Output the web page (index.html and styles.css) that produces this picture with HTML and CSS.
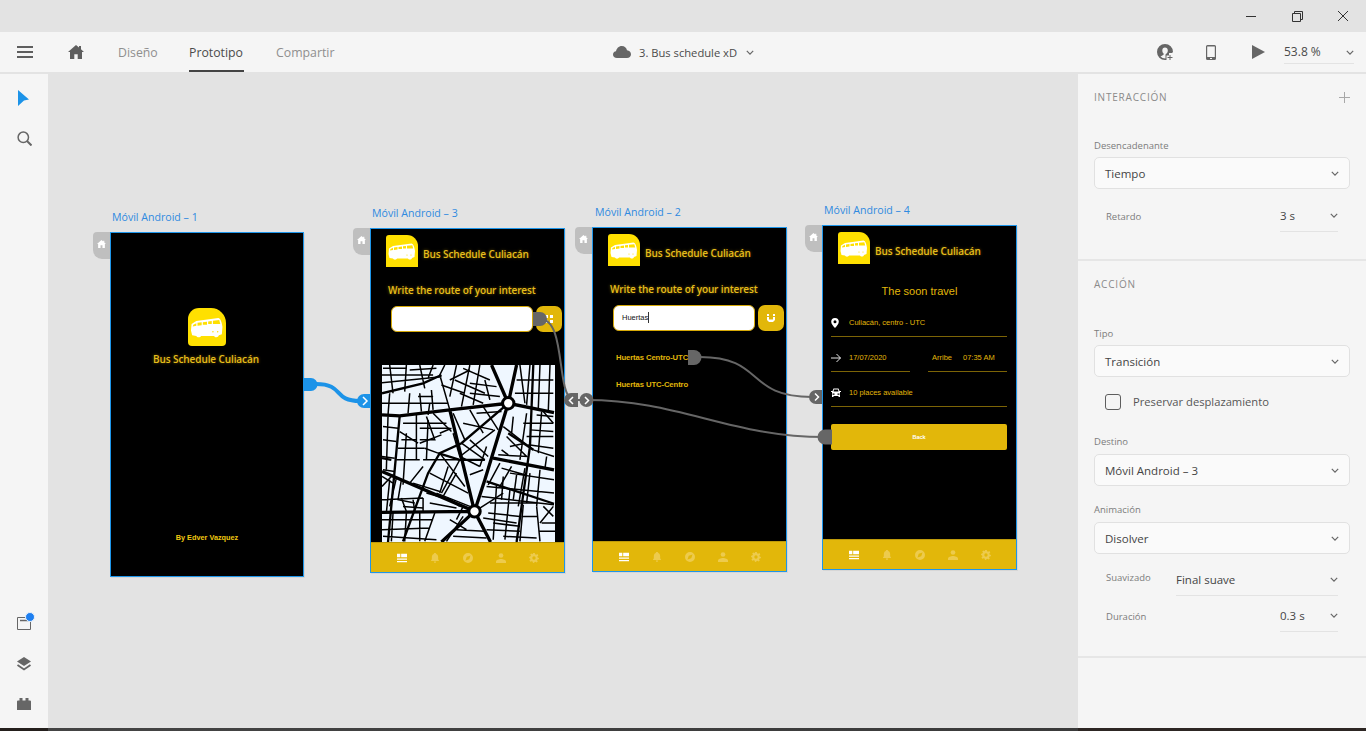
FILE: index.html
```html
<!DOCTYPE html>
<html lang="es">
<head>
<meta charset="utf-8">
<title>3. Bus schedule xD</title>
<link rel="stylesheet" href="styles.css">
</head>
<body>
<svg class="defs" aria-hidden="true">
  <symbol id="bus" viewBox="0 0 32 32">
    <path fill="#fff" d="M3 13.500 7 11 25.500 8.500C27.500 9 28.500 12 29 16L28.500 22 26 23C25.500 25 22.500 25 22 23.500H11C10.500 25 7.500 25 7 23.500L3.500 23 2.500 19Z"/>
    <path fill="#ffe000" d="M4.500 14 7 12.800V15L4 15.500ZM8 12.500 11.500 12.100V14.500L8 15ZM12.500 12 16 11.500V14H12.500ZM17 11.300 20 11V13.500H17ZM21 10.800 26.300 10.200 27.200 13.500H21Z"/>
    <circle fill="#ffe000" cx="21" cy="20" r=".6"/><circle fill="#ffe000" cx="25" cy="20" r=".6"/>
  </symbol>
  <symbol id="n-list" viewBox="0 0 12 10"><path d="M0 0H4V4H0ZM5 0H12V4H5ZM0 5.500H12V7H0ZM0 8.500H12V10H0Z"/></symbol>
  <symbol id="n-bell" viewBox="0 0 12 12"><path d="M6 0C7 0 7.500.6 7.500 1.200 9.200 1.900 9.800 3.300 9.800 5V7.500L11 9.500H1L2.200 7.500V5C2.200 3.300 2.800 1.900 4.500 1.200 4.500.6 5 0 6 0ZM4.600 10.300H7.400C7.300 11.300 6.700 12 6 12S4.700 11.300 4.600 10.300Z"/></symbol>
  <symbol id="n-comp" viewBox="0 0 12 12"><path fill-rule="evenodd" d="M6 0A6 6 0 1 1 6 12 6 6 0 0 1 6 0ZM9 3 4.500 4.500 3 9 7.500 7.500Z"/></symbol>
  <symbol id="n-user" viewBox="0 0 12 12"><circle cx="6" cy="3" r="2.800"/><path d="M0 12V10.500C0 8.500 3.500 7.300 6 7.300S12 8.500 12 10.500V12Z"/></symbol>
  <symbol id="n-gear" viewBox="0 0 12 12"><path fill-rule="evenodd" d="M5 0H7L7.300 1.600 8.600 2.100 10 1.300 11.200 3 10 4.200 10.300 5.300 12 6 11.700 7.600 10.200 7.900 9.700 9.100 10.500 10.500 9 11.500 7.800 10.400 6.800 10.700 6 12 4.700 11.700 4.300 10.300 3.100 9.800 1.600 10.500.5 9 1.700 7.700 1.400 6.700 0 6 .3 4.400 1.800 4 2.300 2.900 1.500 1.500 3 .5 4.200 1.600ZM6 4A2 2 0 1 0 6 8 2 2 0 0 0 6 4Z"/></symbol>
  <symbol id="home" viewBox="0 0 16 14"><path d="M8 0 11 2.600V1H13V4.300L16 7H14V14H9.700V9.300H6.300V14H2V7H0Z"/></symbol>
  <symbol id="chev" viewBox="0 0 10 6"><path d="M1 1 5 5 9 1" fill="none" stroke="#666" stroke-width="1.500"/></symbol>
</svg>

<div class="app">
  <header class="titlebar">
    <svg class="winbtn" viewBox="0 0 46 32"><path d="M18 16.500H28" stroke="#333" fill="none"/></svg>
    <svg class="winbtn" viewBox="0 0 46 32"><path d="M18.500 13.500H26.500V21.500H18.500ZM20.500 13.500V11.500H28.500V19.500H26.500" stroke="#333" fill="none"/></svg>
    <svg class="winbtn" viewBox="0 0 46 32"><path d="M18 11 28 21M28 11 18 21" stroke="#333" fill="none"/></svg>
  </header>

  <nav class="topbar">
    <div class="top-left">
      <svg class="burger" viewBox="0 0 16 12"><path d="M0 0H16V2H0ZM0 5H16V7H0ZM0 10H16V12H0Z" fill="#5e5e5e"/></svg>
      <svg class="top-home"><use href="#home"/></svg>
      <a class="tab tab-a">Diseño</a>
      <a class="tab tab-b active">Prototipo</a>
      <a class="tab tab-c">Compartir</a>
    </div>
    <div class="top-center">
      <svg class="cloud" viewBox="0 0 18 12"><path d="M4 12C1.500 12 0 10.500 0 8.500 0 6.700 1.300 5.500 3 5.300 3.500 2.500 5.700 0 8.800 0 11.500 0 13.500 1.800 14 4.200 16.300 4.500 18 6 18 8.200 18 10.500 16.300 12 14 12Z" fill="#666"/></svg>
      <span class="doc-title">3. Bus schedule xD</span>
      <svg class="chev"><use href="#chev"/></svg>
    </div>
    <div class="top-right">
      <svg class="t-user" viewBox="0 0 17 17"><path fill="#666" fill-rule="evenodd" d="M8 0A8 8 0 0 1 16 8L15 9H12V11.500H9.500V15.900L8 16A8 8 0 0 1 8 0ZM8 3.500C6.300 3.500 5.300 4.800 5.300 6.500 5.300 8 6 9 6.600 9.500V10.800L3.500 12.500A6.500 6.500 0 0 0 8.500 14.500V10.500L9.500 9.500C10.300 9 10.800 7.800 10.800 6.500 10.800 4.800 9.700 3.500 8 3.500Z"/><path d="M13 11V16M10.500 13.500H15.500" stroke="#666" fill="none"/></svg>
      <svg class="t-phone" viewBox="0 0 10 15"><path fill="#666" fill-rule="evenodd" d="M1.500 0H8.500A1.500 1.500 0 0 1 10 1.500V13.500A1.500 1.500 0 0 1 8.500 15H1.500A1.500 1.500 0 0 1 0 13.500V1.500A1.500 1.500 0 0 1 1.500 0ZM1.200 1.500V12H8.800V1.500ZM4 13V14H6V13Z"/></svg>
      <svg class="t-play" viewBox="0 0 13 14"><path d="M0 0 13 7 0 14Z" fill="#666"/></svg>
      <div class="zoomctl"><span>53.8 %</span><svg class="chev"><use href="#chev"/></svg></div>
    </div>
  </nav>

  <div class="workspace">
    <aside class="toolbar">
      <div class="tools">
        <svg class="tool tool-arrow" viewBox="0 0 12 16"><path d="M0 0 11 9.500 6 10.500 0 16Z" fill="#1c93e8"/></svg>
        <svg class="tool tool-search" viewBox="0 0 15 15"><circle cx="6.300" cy="6.300" r="5.200" fill="none" stroke="#666" stroke-width="1.500"/><path d="M10 10 14.500 14.500" stroke="#666" stroke-width="2"/></svg>
      </div>
      <div class="tools tools-bottom">
        <div class="notif">
          <svg class="tool-panel" viewBox="0 0 14 13"><path d="M.5.500H13.500V12.500H.5Z" fill="none" stroke="#666"/><path d="M3 3.500H11" stroke="#666" stroke-width="1.500"/></svg>
          <span class="dot"></span>
        </div>
        <svg class="tool tool-layers" viewBox="0 0 16 14"><path d="M8 0 15 4.500 8 9 1 4.500Z" fill="#666"/><path d="M1.500 8 8 12.500 14.500 8" fill="none" stroke="#666" stroke-width="1.800"/></svg>
        <svg class="tool tool-plug" viewBox="0 0 14 12"><path d="M1 2.500H2.500V0H5.500V2.500H8.500V0H11.500V2.500H13A1 1 0 0 1 14 3.500V12H0V3.500A1 1 0 0 1 1 2.500Z" fill="#666"/></svg>
      </div>
    </aside>

    <main class="canvas">
      <!-- Móvil Android – 1 -->
      <section class="board board-1">
        <div class="board-label">Móvil Android – 1</div>
        <div class="screen screen-splash">
          <span class="home-tab"><svg><use href="#home"/></svg></span>
          <div class="logo logo-round"><svg><use href="#bus"/></svg></div>
          <div class="brand">Bus Schedule Culiacán</div>
          <div class="by">By Edver Vazquez</div>
        </div>
      </section>

      <!-- Móvil Android – 3 -->
      <section class="board board-3">
        <div class="board-label">Móvil Android – 3</div>
        <div class="screen">
          <span class="home-tab"><svg><use href="#home"/></svg></span>
          <div class="app-head"><div class="logo"><svg><use href="#bus"/></svg></div><div class="brand">Bus Schedule Culiacán</div></div>
          <div class="heading">Write the route of your interest</div>
          <div class="search-row">
            <div class="field"></div>
            <div class="go"><svg viewBox="0 0 10 10"><path d="M1 1H4V4H1ZM6 1H9V4H6ZM1 6H4V9H1ZM6 6H9V9H6Z" fill="#fff"/></svg></div>
          </div>
          <svg class="map" viewBox="37 15 518 532" preserveAspectRatio="none">
            <rect x="37" y="15" width="518" height="532" fill="#eff7ff"/>
            <g class="road-thin">
              <path d="M37 45H190M37 68 215 50M60 15 70 100M110 15 105 95M150 15 165 85M190 15 175 55M225 15 210 45 240 150"/>
              <path d="M260 15 240 110M300 15 275 140M330 15 310 135M255 60 345 100M280 25 360 60M215 75 285 100"/>
              <path d="M450 15 465 130M480 15 470 135M510 15 505 145M540 15 535 150M440 60H550M435 100H550"/>
              <path d="M37 130H235M120 100 115 160M150 100 155 155M185 90 190 150M60 100 55 165M145 110H190"/>
              <path d="M40 200 85 205M40 240 80 245M55 170 50 330M90 215 145 250M85 265H165M80 300H150M110 220 100 375M140 165 140 300M170 170 195 240 150 240M190 160 245 215"/>
              <path d="M210 220 245 205M250 160 285 240M280 190 370 210M300 150 340 220M340 140 385 210M320 160 395 155M375 210 270 290 250 220"/>
              <path d="M400 200 490 270M470 160 450 300M515 155 505 280M460 190H550M470 230H550M490 270 552 290M420 260 465 250M410 230 470 290 385 285"/>
              <path d="M275 250 345 300M300 240 355 290M270 290 330 320M330 320 350 260M150 205H240M165 265 205 280"/>
              <path d="M160 300 270 300 215 400M210 280 285 380M180 340 295 400M235 320 210 400M260 340 220 410M300 345 340 330M120 370 160 320M95 360 85 420 135 430M130 370 210 395"/>
              <path d="M37 380 70 345M37 420 160 415M60 360 50 460M95 415 110 455M130 420 135 455M160 415 160 455M200 400 300 440M37 290 75 295M40 330 75 335"/>
              <path d="M350 380 552 400M335 410 552 435M390 310 355 375M425 320 390 380M465 325 445 440M510 330 500 440M380 375 370 540M420 390 405 540M460 435 450 545M420 340 552 360M395 325 465 345"/>
              <path d="M330 445 400 400M340 475 440 490M350 510 450 515M500 440 510 545M550 440 510 490M515 490H555M505 515H555M455 470H505"/>
              <path d="M37 480H190M37 510 180 505M40 530 200 540M70 460 65 545M110 460 105 545M150 460 150 545M195 460 165 545M230 545 280 470M260 510 345 515M250 530 350 535M240 480 290 510"/>
              <path d="M395 270 415 285M530 290 525 325M280 440 260 480M500 165 550 170M300 100 390 110M345 60 360 120M180 130 175 165M235 415 270 440"/>
              <path d="M100 190H230M95 240H140M150 250 215 225M175 180 170 300M430 170 425 220M480 210 550 215M475 255 550 265M520 155 550 190"/>
              <path d="M360 430H500M355 460 450 470M370 490 450 500M400 350 395 420M440 345 430 420M480 340 470 430M520 440 550 470M400 530 500 535"/>
              <path d="M240 60 300 30M270 100 340 130M380 80 300 70M40 25H110M120 30 200 25M37 350 70 370M80 355 60 440M100 440 160 445M170 400 240 420M180 430 260 445"/>
            </g>
            <g class="road-mid">
              <path d="M90 168 75 330 55 547M37 100 160 70 215 45M415 130 275 250 210 280 175 340 100 545M350 365 552 432M490 15 480 260 440 547M490 270 415 220"/>
              <path d="M37 295 65 300M205 280 270 300 345 300"/>
            </g>
            <g class="road-major">
              <path d="M37 165 90 168 240 150 415 130 552 158M415 130 345 360 314 455M240 150 314 455M37 335 314 455M37 458 314 455M314 455 362 547M314 455 215 547M415 130 365 15M415 130 440 15M370 295 552 330"/>
            </g>
            <circle cx="415" cy="130" r="17" fill="#fff" stroke="#000" stroke-width="9"/>
            <circle cx="314" cy="455" r="17" fill="#fff" stroke="#000" stroke-width="9"/>
          </svg>
          <div class="tabbar">
            <svg class="on"><use href="#n-list"/></svg><svg><use href="#n-bell"/></svg><svg><use href="#n-comp"/></svg><svg><use href="#n-user"/></svg><svg><use href="#n-gear"/></svg>
          </div>
        </div>
      </section>

      <!-- Móvil Android – 2 -->
      <section class="board board-2">
        <div class="board-label">Móvil Android – 2</div>
        <div class="screen">
          <span class="home-tab"><svg><use href="#home"/></svg></span>
          <div class="app-head"><div class="logo"><svg><use href="#bus"/></svg></div><div class="brand">Bus Schedule Culiacán</div></div>
          <div class="heading">Write the route of your interest</div>
          <div class="search-row">
            <div class="field field-filled"><span class="typed">Huertas</span></div>
            <div class="go"><svg viewBox="0 0 10 10"><path d="M1 1H3V3H1ZM7 1H9V3H7ZM1 4V7L3 9H7L9 7V4H7V6.500H3V4Z" fill="#fff"/></svg></div>
          </div>
          <ul class="routes">
            <li>Huertas Centro-UTC</li>
            <li>Huertas UTC-Centro</li>
          </ul>
          <div class="tabbar">
            <svg class="on"><use href="#n-list"/></svg><svg><use href="#n-bell"/></svg><svg><use href="#n-comp"/></svg><svg><use href="#n-user"/></svg><svg><use href="#n-gear"/></svg>
          </div>
        </div>
      </section>

      <!-- Móvil Android – 4 -->
      <section class="board board-4">
        <div class="board-label">Móvil Android – 4</div>
        <div class="screen">
          <span class="home-tab"><svg><use href="#home"/></svg></span>
          <div class="app-head"><div class="logo"><svg><use href="#bus"/></svg></div><div class="brand">Bus Schedule Culiacán</div></div>
          <div class="soon">The soon travel</div>
          <div class="detail">
            <div class="d-row">
              <svg viewBox="0 0 10 10"><path fill="#fff" fill-rule="evenodd" d="M4 0A3.800 3.800 0 0 1 7.800 3.800C7.800 6 5.500 8.500 4 10 2.500 8.500.2 6 .2 3.800A3.800 3.800 0 0 1 4 0ZM4 2.300A1.500 1.500 0 1 0 4 5.300 1.500 1.500 0 0 0 4 2.300Z"/></svg>
              <span>Culiacán, centro - UTC</span>
            </div>
            <div class="d-split">
              <div class="d-row">
                <svg viewBox="0 0 10 10"><path d="M0 5H9.500M5.500 1 9.500 5 5.500 9" fill="none" stroke="#fff" stroke-width=".9"/></svg>
                <span>17/07/2020</span>
              </div>
              <div class="d-row d-arrive"><span>Arribe</span><span>07:35 AM</span></div>
            </div>
            <div class="d-row">
              <svg viewBox="0 0 10 9"><path fill="#fff" d="M2.500 0H7.500L8.500 2.500H10V3.500H9V8.500H7.500V7.500H2.500V8.500H1V3.500H0V2.500H1.500ZM3 1 2.500 3H7.500L7 1ZM1.500 5V6.200H3.500V5ZM6.500 5V6.200H8.500V5Z"/></svg>
              <span>10 places available</span>
            </div>
          </div>
          <div class="back">Back</div>
          <div class="tabbar">
            <svg class="on"><use href="#n-list"/></svg><svg><use href="#n-bell"/></svg><svg><use href="#n-comp"/></svg><svg><use href="#n-user"/></svg><svg><use href="#n-gear"/></svg>
          </div>
        </div>
      </section>

      <!-- Connector wires over the artboards -->
      <svg class="wires" viewBox="48 74 1030 654">
        <path d="M316 384C345 384 332 401 360 401" fill="none" stroke="#1c93e8" stroke-width="4"/>
        <path d="M303 378H311A6.500 6.500 0 0 1 311 391H303Z" fill="#1c93e8"/>
        <path d="M364 394H370V408H364A7 7 0 0 1 364 394Z" fill="#1c93e8"/>
        <path d="M363 397 367 401 363 405" fill="none" stroke="#fff" stroke-width="1.500"/>

        <path d="M540 319C566 319 556 390 572 400" fill="none" stroke="#666" stroke-width="2"/>
        <path d="M533 312H540A7 7 0 0 1 540 326H533Z" fill="#666"/>
        <path d="M586 400C680 400 730 437 825 437" fill="none" stroke="#666" stroke-width="2"/>
        <path d="M571 393H578V407H571A7 7 0 0 1 571 393Z" fill="#666"/>
        <path d="M573 397 569.500 400.500 573 404" fill="none" stroke="#fff" stroke-width="1.500"/>
        <path d="M572 400H582" stroke="#666" stroke-width="2"/>
        <circle cx="586.500" cy="400" r="7" fill="#666"/>
        <path d="M585 397 588.500 400.500 585 404" fill="none" stroke="#fff" stroke-width="1.500"/>

        <path d="M700 357C765 357 745 397 812 397" fill="none" stroke="#666" stroke-width="2"/>
        <path d="M688 350H694A7.500 7.500 0 0 1 694 365H688Z" fill="#666"/>
        <path d="M816 390H822V404H816A7 7 0 0 1 816 390Z" fill="#666"/>
        <path d="M815 393.500 818.500 397 815 400.500" fill="none" stroke="#fff" stroke-width="1.500"/>

        <path d="M825 429.500H832V444.500H825A7.500 7.500 0 0 1 825 429.500Z" fill="#666"/>
      </svg>
    </main>

    <aside class="panel">
      <section class="p-sec p-int">
        <div class="p-head"><h2>INTERACCIÓN</h2><svg viewBox="0 0 11 11"><path d="M5.500 0V11M0 5.500H11" stroke="#a8a8a8" fill="none"/></svg></div>
        <label class="lbl lbl-first">Desencadenante</label>
        <div class="sel"><span>Tiempo</span><svg class="chev"><use href="#chev"/></svg></div>
        <div class="sub"><span class="sub-l">Retardo</span><div class="sub-v sub-short"><span>3 s</span><svg class="chev"><use href="#chev"/></svg></div></div>
      </section>
      <section class="p-sec p-act">
        <div class="p-head"><h2>ACCIÓN</h2></div>
        <label class="lbl lbl-first lbl-tipo">Tipo</label>
        <div class="sel"><span>Transición</span><svg class="chev"><use href="#chev"/></svg></div>
        <div class="check"><span class="box"></span><span class="check-text">Preservar desplazamiento</span></div>
        <label class="lbl lbl-dest">Destino</label>
        <div class="sel"><span>Móvil Android – 3</span><svg class="chev"><use href="#chev"/></svg></div>
        <label class="lbl lbl-anim">Animación</label>
        <div class="sel"><span>Disolver</span><svg class="chev"><use href="#chev"/></svg></div>
        <div class="sub sub-ease"><span class="sub-l">Suavizado</span><div class="sub-v sub-long"><span>Final suave</span><svg class="chev"><use href="#chev"/></svg></div></div>
        <div class="sub sub-dur"><span class="sub-l">Duración</span><div class="sub-v sub-short"><span>0.3 s</span><svg class="chev"><use href="#chev"/></svg></div></div>
      </section>
    </aside>
  </div>
  <div class="taskstrip"></div>
</div>
</body>
</html>
```
FILE: styles.css
```css
* { box-sizing: border-box; }
html, body { margin: 0; padding: 0; }
body { width: 1366px; height: 731px; overflow: hidden; background: #e3e3e3; font-family: "Open Sans", "Noto Sans", sans-serif; color: #444; }
.defs { position: absolute; width: 0; height: 0; }
.app { display: flex; flex-direction: column; height: 731px; }

/* title bar */
.titlebar { height: 32px; background: #e3e3e3; display: flex; justify-content: flex-end; flex: none; }
.winbtn { width: 46px; height: 32px; display: block; }

/* top bar */
.topbar { height: 40px; flex: none; background: #f5f5f5; position: relative; display: flex; justify-content: space-between; }
.top-left { display: flex; align-items: center; }
.burger { width: 16px; height: 12px; margin-left: 17px; }
.top-home { width: 16px; height: 14px; margin-left: 35px; fill: #5e5e5e; }
.tab { font-size: 12.300px; color: #8f8f8f; height: 40px; line-height: 41px; white-space: nowrap; }
.tab-a { margin-left: 34px; width: 71px; }
.tab-b { width: 87px; }
.tab-b.active { color: #4b4b4b; position: relative; }
.tab-b.active::after { content: ""; position: absolute; left: 0; bottom: 0; width: 55px; height: 2px; background: #444; }
.top-center { position: absolute; left: 613px; top: 0; height: 40px; display: flex; align-items: center; }
.cloud { width: 18px; height: 12px; }
.doc-title { font-size: 11.200px; color: #4b4b4b; margin-left: 8px; white-space: nowrap; width: 107px; }
.chev { width: 8px; height: 5px; display: block; flex: none; }
.top-right { display: flex; align-items: center; height: 40px; margin-left: auto; }
.t-user { width: 17px; height: 17px; }
.t-phone { width: 10px; height: 15px; margin-left: 32px; }
.t-play { width: 13px; height: 14px; margin-left: 36px; }
.zoomctl { width: 70px; margin: 0 12px 0 19px; height: 23px; border-bottom: 1px solid #e3e3e3; display: flex; justify-content: space-between; align-items: center; font-size: 12px; color: #4b4b4b; }
.zoomctl .chev { margin-top: 2px; }

/* workspace */
.workspace { flex: 1; display: flex; margin-top: 2px; min-height: 0; }
.toolbar { width: 48px; flex: none; background: #f5f5f5; display: flex; flex-direction: column; justify-content: space-between; align-items: center; }
.tools { display: flex; flex-direction: column; align-items: center; }
.tool-arrow { width: 12px; height: 16px; margin-top: 16px; display: block; }
.tool-search { width: 15px; height: 15px; margin-top: 25px; display: block; }
.tools-bottom { padding-bottom: 18px; }
.notif { position: relative; width: 14px; height: 13px; }
.tool-panel { width: 14px; height: 13px; display: block; }
.dot { position: absolute; right: -4px; top: -5px; width: 10px; height: 10px; border-radius: 50%; background: #1e7ff0; border: 1px solid #e8f0fa; }
.tool-layers { width: 16px; height: 14px; margin-top: 27px; display: block; }
.tool-plug { width: 14px; height: 12px; margin-top: 27px; display: block; }

/* canvas */
.canvas { flex: 1; position: relative; background: #e3e3e3; overflow: hidden; }
.board { position: absolute; width: 195px; }
.board-1 { left: 62px; top: 136px; width: 194px; }
.board-3 { left: 322px; top: 132px; }
.board-2 { left: 544px; top: 131px; }
.board-4 { left: 774px; top: 129px; }
.board-label { height: 14px; line-height: 14px; font-size: 10.600px; color: #2f8ae0; margin: 0 0 8px 2px; white-space: nowrap; }
.board-2 .board-label { margin-left: 3px; }
.screen { position: relative; height: 345px; background: #000; border: 1px solid #1e96ea; box-shadow: 1px 1px 0 #d6d6d6; display: flex; flex-direction: column; }
.home-tab { position: absolute; left: -18px; top: -1px; width: 17px; height: 27px; background: #bfbfbf; border-radius: 4px 0 0 9px; display: flex; justify-content: center; padding-top: 8px; }
.home-tab svg { width: 9px; height: 8px; fill: #fff; }

.logo { width: 32px; height: 32px; background: #ffe000; border-radius: 3px 11px 0 0; flex: none; }
.logo svg { width: 100%; height: 100%; display: block; }
.brand { font-size: 10px; font-weight: 600; color: #e6bd1c; text-shadow: 0 0 3px rgba(255, 200, 0, .45); white-space: nowrap; letter-spacing: -.1px; }
.app-head { display: flex; align-items: center; padding: 6px 0 0 15px; height: 38px; flex: none; }
.app-head .brand { margin-left: 5px; padding-top: 5px; }
.heading { font-size: 10px; font-weight: 600; color: #e6bd1c; text-shadow: 0 0 3px rgba(255, 200, 0, .45); margin: 16px 0 0 17px; height: 15px; line-height: 15px; white-space: nowrap; letter-spacing: -.12px; flex: none; }
.search-row { display: flex; gap: 3px; margin: 8px 0 0 20px; height: 26px; flex: none; }
.field { width: 142px; background: #fff; border: 1px solid #d6a908; border-radius: 6px; }
.field-filled { display: flex; align-items: center; padding: 0 0 2px 8px; }
.typed { font: 7.500px "Liberation Sans", sans-serif; color: #111; border-right: 1px solid #333; line-height: 11px; }
.go { width: 26px; background: #e2b70a; border-radius: 7px; display: flex; align-items: center; justify-content: center; }
.go svg { width: 10px; height: 10px; }
.map { width: 173px; height: 177px; margin: 33px 0 0 11px; display: block; flex: none; }
.road-thin path { fill: none; stroke: #000; stroke-width: 4.500; }
.road-mid path { fill: none; stroke: #000; stroke-width: 7; }
.road-major path { fill: none; stroke: #000; stroke-width: 10; }
.tabbar { margin-top: auto; height: 30px; background: #e2b70a; border-top: 1px solid #bd9a0a; display: flex; align-items: center; justify-content: center; gap: 23px; flex: none; }
.tabbar svg { width: 10px; height: 10px; fill: #edcb4d; display: block; }
.tabbar svg.on { fill: #fff; }

/* splash */
.screen-splash { align-items: center; }
.logo-round { width: 38px; height: 38px; border-radius: 11px 15px 4px 4px; margin-top: 75px; }
.screen-splash .brand { margin: 6px 2px 0 0; }
.by { margin-top: 167px; font: bold 7.300px "Liberation Sans", sans-serif; color: #f0c810; }

/* routes */
.routes { list-style: none; margin: 18px 0 0 23px; padding: 0; font: bold 7.700px "Liberation Sans", sans-serif; color: #e2b70a; }
.routes li { height: 27px; line-height: 17px; white-space: nowrap; letter-spacing: -.1px; }

/* detail */
.soon { font: 11px "Liberation Sans", sans-serif; color: #e2b70a; text-align: center; margin-top: 20px; height: 14px; line-height: 14px; }
.detail { margin: 4px 9px 0 8px; display: flex; flex-direction: column; }
.d-row { height: 35px; padding-top: 7px; display: flex; align-items: center; font: 7.500px "Liberation Sans", sans-serif; color: #e2b70a; border-bottom: 1px solid #7c6406; white-space: nowrap; }
.d-row svg { width: 10px; height: 10px; margin-right: 8px; flex: none; }
.d-split { display: flex; justify-content: space-between; }
.d-split .d-row { width: 79px; }
.d-arrive { gap: 11px; padding-left: 4px; }
.back { margin: 17px 9px 0 8px; height: 26px; background: #e2b70a; border-radius: 2px; color: #fff; font: bold 5.500px/26px "Liberation Sans", sans-serif; text-align: center; }

/* wires */
.wires { position: absolute; left: 0; top: 0; width: 1030px; height: 654px; pointer-events: none; }

/* panel */
.panel { width: 288px; flex: none; background: #f5f5f5; font-size: 12px; }
.p-sec { border-bottom: 2px solid #e6e6e6; padding: 15px 16px 0; }
.p-int { height: 187px; }
.p-act { height: 397px; }
.p-head { display: flex; justify-content: space-between; align-items: center; height: 16px; }
.p-head h2 { margin: 0; font-size: 10px; font-weight: 400; letter-spacing: .8px; color: #8a8a8a; }
.p-head svg { width: 11px; height: 11px; }
.lbl { display: block; font-size: 9.500px; color: #7c7c7c; height: 14px; line-height: 16px; margin: 16px 0 6px; }
.lbl-first { margin: 33px 0 5px; }
.lbl-tipo { margin-top: 34px; }
.lbl-dest { margin-top: 23px; }
.sel { width: 256px; height: 32px; border: 1px solid #e1e1e1; border-radius: 5px; background: #fafafa; display: flex; justify-content: space-between; align-items: center; padding: 0 10px; font-size: 11.500px; color: #444; }
.sub { display: flex; align-items: flex-start; justify-content: space-between; height: 30px; margin: 13px 12px 0; }
.sub-l { font-size: 9.500px; color: #7c7c7c; line-height: 30px; }
.sub-v { border-bottom: 1px solid #e3e3e3; height: 30px; padding-bottom: 2px; display: flex; justify-content: space-between; align-items: center; font-size: 11.500px; color: #444; }
.sub-short { width: 58px; }
.sub-long { width: 162px; }
.sub-ease { margin-top: 12px; }
.sub-ease .sub-l { line-height: 24px; }
.sub-dur { margin-top: 6px; }
.check { display: flex; align-items: center; height: 18px; margin: 16px 0 0 11px; font-size: 11.200px; color: #555; gap: 12px; }
.check-text { padding-bottom: 2px; }
.box { width: 16px; height: 16px; border: 1.500px solid #5e5e5e; border-radius: 3px; display: block; }

.taskstrip { height: 3px; flex: none; background: linear-gradient(to right, #241f1c 48px, #444 48px, #3a3a3a 1078px, #2d2623 1078px); }
```
